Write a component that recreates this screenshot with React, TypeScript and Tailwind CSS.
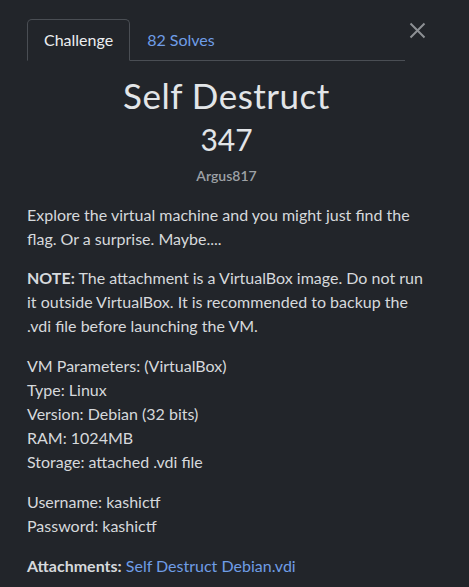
import React from "react";

export default function App() {
  return (
    <div
      className="w-[469px] h-[587px] bg-[#22252a] text-[#d6d9dc] overflow-hidden"
      style={{ fontFamily: "Lato, 'Open Sans', sans-serif" }}
    >
      <div className="pl-[27px] pr-[43px] pt-[19px]">
        <div className="flex items-start">
          <div className="flex w-[378px] border-b border-[#4a4e54]">
            <div className="-mb-px h-[42px] px-[16px] flex items-center border border-[#4a4e54] border-b-[#22252a] rounded-t-[5px] text-[16px] text-[#eceef0]">
              Challenge
            </div>
            <div className="h-[41px] px-[17px] flex items-center text-[16px] text-[#6f9de6]">
              82 Solves
            </div>
          </div>
          <button className="ml-[4px] mt-[3px] text-[#8d9094]">
            <svg width="17" height="17" viewBox="0 0 17 17">
              <path d="M1.5 1.5 L15.5 15.5 M15.5 1.5 L1.5 15.5" stroke="currentColor" strokeWidth="2" />
            </svg>
          </button>
        </div>

        <div className="flex flex-col items-center mt-[11px]">
          <h1 className="text-[35px] leading-[46px] text-[#e2e5e8] tracking-[0.5px]">Self Destruct</h1>
          <div className="text-[30px] leading-[40px] text-[#e2e5e8] mt-[1px]">347</div>
          <div className="text-[14px] leading-[20px] font-semibold text-[#9da1a6] mt-[7px]">Argus817</div>
        </div>

        <div className="mt-[17px] text-[16px] leading-[24px] w-[399px]">
          <p>Explore the virtual machine and you might just find the flag. Or a surprise. Maybe....</p>
          <p className="mt-[15px]">
            <strong className="font-bold">NOTE:</strong> The attachment is a VirtualBox image. Do not run it outside VirtualBox. It is recommended to backup the .vdi file before launching the VM.
          </p>
          <p className="mt-[16px]">
            VM Parameters: (VirtualBox)
            <br />
            Type: Linux
            <br />
            Version: Debian (32 bits)
            <br />
            RAM: 1024MB
            <br />
            Storage: attached .vdi file
          </p>
          <p className="mt-[16px]">
            Username: kashictf
            <br />
            Password: kashictf
          </p>
          <p className="mt-[16px]">
            <strong className="font-bold">Attachments:</strong>{" "}
            <a className="text-[#6f9de6]">Self Destruct Debian.vdi</a>
          </p>
        </div>
      </div>
    </div>
  );
}
